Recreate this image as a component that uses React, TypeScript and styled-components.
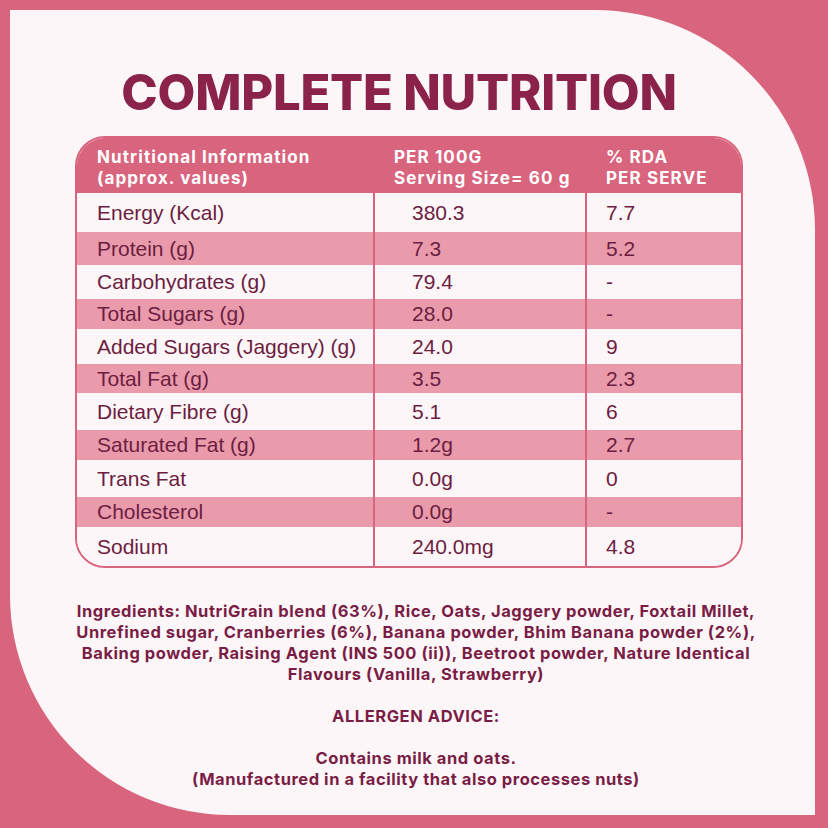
import React from "react";
import styled, { createGlobalStyle } from "styled-components";

const GlobalStyle = createGlobalStyle`
  html, body {
    margin: 0;
    padding: 0;
    background: #d9647e;
  }
  * { box-sizing: border-box; }
`;

const Page = styled.div`
  width: 828px;
  height: 828px;
  padding: 10px 13px 13px 10px;
  background: #d9647e;
`;

const Card = styled.div`
  width: 805px;
  height: 805px;
  background: #fcf6f9;
  border-radius: 0 220px 0 220px;
  display: flex;
  flex-direction: column;
  padding-top: 53px;
`;

const Title = styled.h1`
  margin: 0;
  padding-right: 27px;
  text-align: center;
  font-family: Inter, "Liberation Sans", sans-serif;
  font-weight: 800;
  font-size: 49px;
  line-height: 60px;
  color: #8a2249;
  letter-spacing: -0.2px;
`;

const Table = styled.div`
  margin: 13px 0 0 65px;
  width: 668px;
  border: 2px solid #d9647e;
  border-radius: 30px;
  overflow: hidden;
  display: grid;
  grid-template-columns: 296px 212px 1fr;
  background: #fcf6f9;
`;

const HeadCell = styled.div<{ $pad: number }>`
  background: #d9647e;
  height: 55px;
  padding: 9px 0 0 ${(p) => p.$pad}px;
  font-family: Inter, "Liberation Sans", sans-serif;
  font-weight: 700;
  font-size: 17px;
  line-height: 21px;
  letter-spacing: 1.1px;
  color: #ffffff;
  white-space: nowrap;
`;

const Cell = styled.div<{ $stripe: boolean; $h: number; $pad: number; $divider: boolean }>`
  height: ${(p) => p.$h}px;
  background: ${(p) => (p.$stripe ? "#e99bac" : "#fcf6f9")};
  border-left: ${(p) => (p.$divider ? "2px solid #d9647e" : "none")};
  padding-left: ${(p) => p.$pad}px;
  display: flex;
  align-items: center;
  font-family: "Liberation Sans", Arial, sans-serif;
  font-size: 21px;
  color: #6c1d40;
  white-space: nowrap;
`;

const Notes = styled.div`
  margin-top: 33px;
  padding-left: 7px;
  text-align: center;
  font-family: Inter, "Liberation Sans", sans-serif;
  font-weight: 700;
  font-size: 16.5px;
  line-height: 21px;
  letter-spacing: 0.55px;
  color: #7a1d45;
`;

const Para = styled.p`
  margin: 0 0 21px 0;
  white-space: nowrap;
`;

const rows: [string, string, string, number][] = [
  ["Energy (Kcal)", "380.3", "7.7", 39],
  ["Protein (g)", "7.3", "5.2", 33],
  ["Carbohydrates (g)", "79.4", "-", 34],
  ["Total Sugars (g)", "28.0", "-", 30],
  ["Added Sugars (Jaggery) (g)", "24.0", "9", 35],
  ["Total Fat (g)", "3.5", "2.3", 29],
  ["Dietary Fibre (g)", "5.1", "6", 37],
  ["Saturated Fat (g)", "1.2g", "2.7", 30],
  ["Trans Fat", "0.0g", "0", 37],
  ["Cholesterol", "0.0g", "-", 30],
  ["Sodium", "240.0mg", "4.8", 39],
];

export default function App() {
  return (
    <>
      <GlobalStyle />
      <Page>
        <Card>
          <Title>COMPLETE NUTRITION</Title>
          <Table>
            <HeadCell $pad={20}>
              Nutritional Information
              <br />
              (approx. values)
            </HeadCell>
            <HeadCell $pad={21}>
              PER 100G
              <br />
              Serving Size= 60 g
            </HeadCell>
            <HeadCell $pad={21}>
              % RDA
              <br />
              PER SERVE
            </HeadCell>
            {rows.map(([label, v, rda, h], i) => (
              <React.Fragment key={label}>
                <Cell $stripe={i % 2 === 1} $h={h} $pad={20} $divider={false}>
                  {label}
                </Cell>
                <Cell $stripe={i % 2 === 1} $h={h} $pad={37} $divider={true}>
                  {v}
                </Cell>
                <Cell $stripe={i % 2 === 1} $h={h} $pad={19} $divider={true}>
                  {rda}
                </Cell>
              </React.Fragment>
            ))}
          </Table>
          <Notes>
            <Para>
              Ingredients: NutriGrain blend (63%), Rice, Oats, Jaggery powder, Foxtail Millet,
              <br />
              Unrefined sugar, Cranberries (6%), Banana powder, Bhim Banana powder (2%),
              <br />
              Baking powder, Raising Agent (INS 500 (ii)), Beetroot powder, Nature Identical
              <br />
              Flavours (Vanilla, Strawberry)
            </Para>
            <Para>ALLERGEN ADVICE:</Para>
            <Para>
              Contains milk and oats.
              <br />
              (Manufactured in a facility that also processes nuts)
            </Para>
          </Notes>
        </Card>
      </Page>
    </>
  );
}
